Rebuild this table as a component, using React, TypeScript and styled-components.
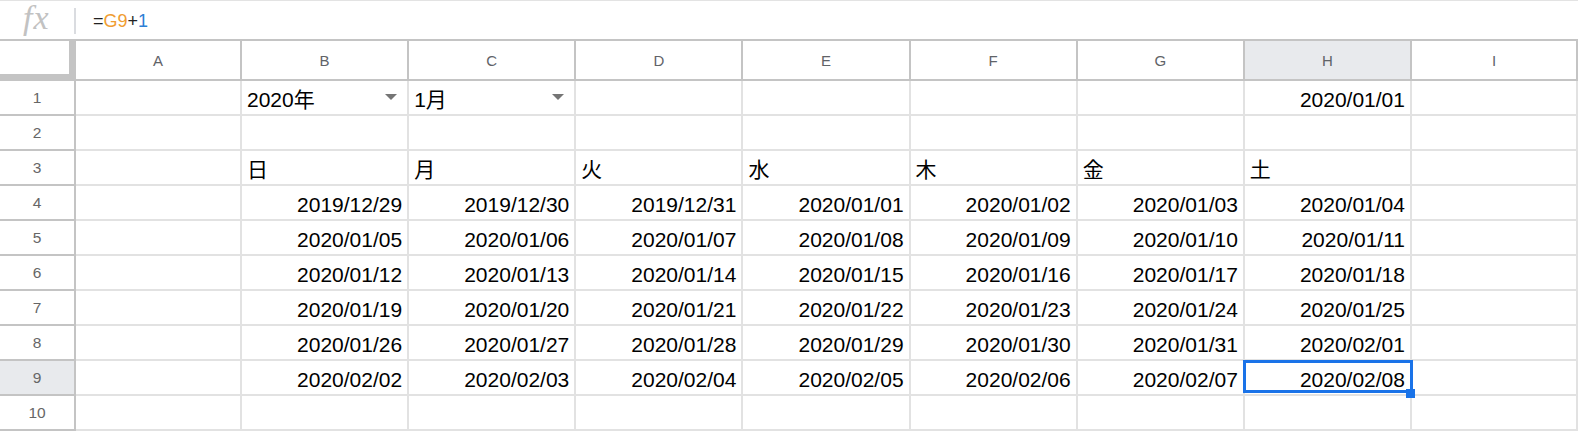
import React from 'react';
import styled, { createGlobalStyle } from 'styled-components';

const GlobalStyle = createGlobalStyle`
  html, body {
    margin: 0;
    padding: 0;
    background: #ffffff;
    overflow: hidden;
  }

  body {
    font-family: 'Liberation Sans', Arial, 'Noto Sans CJK JP', sans-serif;
  }
`;

const COLUMNS = ['A', 'B', 'C', 'D', 'E', 'F', 'G', 'H', 'I'];
const WEEKDAYS = ['日', '月', '火', '水', '木', '金', '土'];
const ACTIVE_COL = 'H';
const ACTIVE_ROW = 9;

const pad = (n: number): string => (n < 10 ? `0${n}` : `${n}`);

const formatDate = (d: Date): string =>
  `${d.getFullYear()}/${pad(d.getMonth() + 1)}/${pad(d.getDate())}`;

// rows 4..9, 7 days each, starting on the sunday before 2020/01/01
function buildWeeks (): string[][] {
  const start = new Date(2019, 11, 29);
  const weeks: string[][] = [];

  for (let w = 0; w < 6; w++) {
    const days: string[] = [];

    for (let d = 0; d < 7; d++) {
      const day = new Date(start.getFullYear(), start.getMonth(), start.getDate() + w * 7 + d);

      days.push(formatDate(day));
    }

    weeks.push(days);
  }

  return weeks;
}

const Page = styled.div`
  display: flex;
  flex-direction: column;
  width: 1578px;
  height: 431px;
  overflow: hidden;
`;

const FormulaBar = styled.div`
  display: flex;
  align-items: center;
  box-sizing: border-box;
  height: 41px;
  border-top: 1px solid #e3e3e3;
  border-bottom: 2px solid #c4c4c4;
`;

const FxLabel = styled.div`
  width: 74px;
  box-sizing: border-box;
  padding-left: 23px;
  font-family: 'Liberation Serif', 'Times New Roman', serif;
  font-style: italic;
  font-size: 34px;
  letter-spacing: 1px;
  line-height: 36px;
  color: #c2c2c2;
  margin-top: -5px;
`;

const Divider = styled.div`
  width: 2px;
  height: 26px;
  background: #dadce0;
  margin-top: 1px;
`;

const FormulaText = styled.div`
  padding-left: 17px;
  font-size: 18px;
  color: #222222;
  margin-top: 3px;
`;

const Token = styled.span<{ $kind: 'ref' | 'num' }>`
  color: ${(p) => (p.$kind === 'ref' ? '#f09d32' : '#2c7fd6')};
`;

const Grid = styled.div`
  display: grid;
  grid-template-columns: 76px 166px repeat(7, 167.143px) 166px;
  grid-template-rows: 40px repeat(10, 35px);
`;

const Corner = styled.div`
  box-sizing: border-box;
  background: #ffffff;
  border-right: 7px solid #c4c4c4;
  border-bottom: 7px solid #c4c4c4;
`;

const ColHeader = styled.div<{ $active?: boolean }>`
  display: flex;
  align-items: center;
  justify-content: center;
  box-sizing: border-box;
  border-right: 2px solid #c4c4c4;
  border-bottom: 2px solid #c4c4c4;
  background: ${(p) => (p.$active ? '#e8eaed' : '#ffffff')};
  font-size: 15px;
  color: #5f6368;
`;

const RowHeader = styled.div<{ $active?: boolean }>`
  display: flex;
  align-items: center;
  justify-content: center;
  box-sizing: border-box;
  border-right: 2px solid #c4c4c4;
  border-bottom: 2px solid #c4c4c4;
  background: ${(p) => (p.$active ? '#e8eaed' : '#ffffff')};
  font-size: 15.5px;
  color: #666666;
`;

const Cell = styled.div<{ $align?: 'left' | 'right' | 'split' }>`
  position: relative;
  display: flex;
  align-items: flex-end;
  justify-content: ${(p) =>
    p.$align === 'right' ? 'flex-end' : p.$align === 'split' ? 'space-between' : 'flex-start'};
  box-sizing: border-box;
  padding: 0 5px 2px 5px;
  border-right: 2px solid #e2e2e2;
  border-bottom: 2px solid #e2e2e2;
  font-family: 'Liberation Sans', Arial, 'Noto Sans CJK JP', sans-serif;
  font-size: 21px;
  line-height: 24px;
  color: #000000;
  white-space: nowrap;
`;

const DropArrow = styled.span`
  align-self: center;
  width: 0;
  height: 0;
  margin: 1px 5px 0 0;
  border-left: 6px solid transparent;
  border-right: 6px solid transparent;
  border-top: 6px solid #757575;
`;

const Selection = styled.div`
  position: absolute;
  z-index: 2;
  top: -1px;
  left: -2px;
  right: -3px;
  bottom: 1px;
  border: 3px solid #1a73e8;
  pointer-events: none;
`;

const FillHandle = styled.div`
  position: absolute;
  z-index: 3;
  right: -5px;
  bottom: -4px;
  width: 9px;
  height: 9px;
  background: #1a73e8;
`;

type CellMap = Record<string, string>;

function buildCells (): CellMap {
  const cells: CellMap = { H1: '2020/01/01' };
  const cols = COLUMNS.slice(1, 8);

  cols.forEach((c, i) => {
    cells[`${c}3`] = WEEKDAYS[i];
  });

  buildWeeks().forEach((week, w) => {
    week.forEach((date, i) => {
      cells[`${cols[i]}${w + 4}`] = date;
    });
  });

  return cells;
}

const CELLS = buildCells();
const DROPDOWNS: Record<string, string> = { B1: '2020年', C1: '1月' };

function SheetCell ({ col, row }: { col: string; row: number }): React.ReactElement {
  const key = `${col}${row}`;
  const isActive = col === ACTIVE_COL && row === ACTIVE_ROW;

  if (DROPDOWNS[key]) {
    return (
      <Cell $align='split'>
        <span>{DROPDOWNS[key]}</span>
        <DropArrow />
      </Cell>
    );
  }

  const value = CELLS[key];
  const isDate = !!value && /^\d/.test(value);

  return (
    <Cell $align={isDate ? 'right' : 'left'}>
      {value}
      {isActive && (
        <>
          <Selection />
          <FillHandle />
        </>
      )}
    </Cell>
  );
}

export default function App (): React.ReactElement {
  const rows = Array.from({ length: 10 }, (_, i) => i + 1);

  return (
    <>
      <GlobalStyle />
      <Page>
        <FormulaBar>
          <FxLabel>fx</FxLabel>
          <Divider />
          <FormulaText>
            =<Token $kind='ref'>G9</Token>+<Token $kind='num'>1</Token>
          </FormulaText>
        </FormulaBar>
        <Grid>
          <Corner />
          {COLUMNS.map((c) => (
            <ColHeader
              $active={c === ACTIVE_COL}
              key={c}
            >
              {c}
            </ColHeader>
          ))}
          {rows.map((r) => (
            <React.Fragment key={r}>
              <RowHeader $active={r === ACTIVE_ROW}>{r}</RowHeader>
              {COLUMNS.map((c) => (
                <SheetCell
                  col={c}
                  key={c}
                  row={r}
                />
              ))}
            </React.Fragment>
          ))}
        </Grid>
      </Page>
    </>
  );
}
